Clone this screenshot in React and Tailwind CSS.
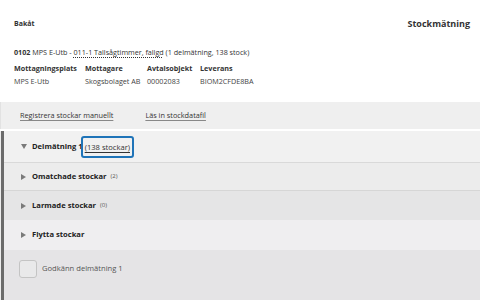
import React from "react";

const Right = () => (
  <svg width="5" height="6" viewBox="0 0 5 6" className="shrink-0">
    <path d="M0 0 L5 3 L0 6 Z" fill="#7a7a7a" />
  </svg>
);

const Down = () => (
  <svg width="6" height="5" viewBox="0 0 6 5" className="shrink-0">
    <path d="M0 0 L6 0 L3 5 Z" fill="#7a7a7a" />
  </svg>
);

const App = () => {
  return (
    <div className="w-[480px] h-[300px] overflow-hidden bg-white text-[#333] font-['Open_Sans',sans-serif]">
      {/* Sidhuvud */}
      <div className="h-[102px] pl-[14px] pr-[10px]">
        <div className="pt-[18px] h-[30px] flex items-center justify-between">
          <span className="text-[7px] font-bold leading-[12px]">Bakåt</span>
          <span className="text-[9px] font-bold leading-[12px]">Stockmätning</span>
        </div>
        <div className="mt-[17px] text-[7.2px] leading-[10px] whitespace-nowrap">
          <span className="font-bold">0102</span> MPS E-Utb -{" "}
          <span className="underline decoration-dotted underline-offset-2">011-1 Tallsågtimmer, fallgd</span>{" "}
          (1 delmätning, 138 stock)
        </div>
        <div className="mt-[6px] flex text-[7.2px] leading-[10px] whitespace-nowrap">
          <div className="w-[71px]">
            <div className="font-bold">Mottagningsplats</div>
            <div className="mt-[3px] text-[#444]">MPS E-Utb</div>
          </div>
          <div className="w-[62px]">
            <div className="font-bold">Mottagare</div>
            <div className="mt-[3px] text-[#444]">Skogsbolaget AB</div>
          </div>
          <div className="w-[53px]">
            <div className="font-bold">Avtalsobjekt</div>
            <div className="mt-[3px] text-[#444]">00002083</div>
          </div>
          <div>
            <div className="font-bold">Leverans</div>
            <div className="mt-[3px] text-[#444]">BIOM2CFDE8BA</div>
          </div>
        </div>
      </div>

      {/* Verktygsrad */}
      <div className="h-[27px] bg-[#efefef] border-l border-[#e2e2e2] flex items-center gap-[32px] pl-[19px] text-[7.3px] text-[#333]">
        <a href="#" className="underline underline-offset-2 decoration-[#888]">Registrera stockar manuellt</a>
        <a href="#" className="underline underline-offset-2 decoration-[#888]">Läs in stockdatafil</a>
      </div>
      <div className="h-[2px] bg-white" />

      {/* Delmätning */}
      <div className="flex h-[169px]">
        <div className="w-[1px] bg-[#ececec]" />
        <div className="w-[3px] bg-[#6b6b6b]" />
        <div className="flex-1 flex flex-col text-[7.6px]">
          <div className="h-[32px] bg-[#f1f1f1] border-b border-[#d9d9d9] flex items-center pl-[17px]">
            <Down />
            <span className="ml-[5px] font-bold text-[#222]">Delmätning 1</span>
            <span className="-ml-[2px] inline-block border-2 border-[#1f74b8] rounded-[3px] px-[2px] py-[4px] leading-[10px]">
              <span className="underline underline-offset-2">(138 stockar)</span>
            </span>
          </div>
          <div className="h-[28px] bg-[#ececec] border-b border-[#d6d6d6] flex items-center pl-[17px]">
            <Right />
            <span className="ml-[6px] font-bold text-[#222]">Omatchade stockar</span>
            <span className="ml-[4px] text-[6px] text-[#555]">(2)</span>
          </div>
          <div className="h-[29px] bg-[#e5e5e6] flex items-center pl-[17px]">
            <Right />
            <span className="ml-[6px] font-bold text-[#222]">Larmade stockar</span>
            <span className="ml-[4px] text-[6px] text-[#555]">(0)</span>
          </div>
          <div className="h-[30px] bg-[#efeef0] flex items-center pl-[17px]">
            <Right />
            <span className="ml-[6px] font-bold text-[#222]">Flytta stockar</span>
          </div>
          <div className="flex-1 bg-[#e5e4e6] pl-[15px] pt-[10px]">
            <label className="flex items-center gap-[5px]">
              <span className="w-[18px] h-[18px] rounded-[3px] border border-[#c4c4c4] bg-[#e9e9ea]" />
              <span className="text-[#555]">Godkänn delmätning 1</span>
            </label>
          </div>
        </div>
      </div>
    </div>
  );
};

export default App;
